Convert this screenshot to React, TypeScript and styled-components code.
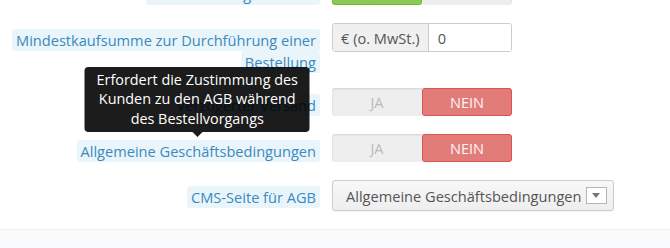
import React from 'react';
import styled, { createGlobalStyle } from 'styled-components';

const GlobalStyle = createGlobalStyle`
    html, body {
        margin: 0;
        padding: 0;
        background: #ffffff;
    }

    body {
        font-family: "Open Sans", "Liberation Sans", sans-serif;
        font-size: 14.6px;
        color: #555555;
        overflow: hidden;
    }
`;

const Panel = styled.div`
    width: 670px;
    height: 248px;
    overflow: hidden;
`;

const Form = styled.div`
    margin-top: -23px;
    padding-bottom: 3px;
`;

const Row = styled.div`
    display: grid;
    grid-template-columns: 324px 1fr;
    column-gap: 8px;
    min-height: 31px;
    margin-bottom: 15px;
`;

const LabelCell = styled.div`
    padding: 6px 4px 0 8px;
    text-align: right;
    line-height: 22px;
`;

const LabelText = styled.span`
    position: relative;
    padding: 1px 4px;
    border-radius: 3px;
    background: #eaf5fb;
    color: #3a8abb;
    -webkit-box-decoration-break: clone;
    box-decoration-break: clone;
`;

const Tooltip = styled.div`
    position: absolute;
    left: 50%;
    bottom: calc(100% + 8px);
    transform: translateX(calc(-50% - 1px));
    width: 225px;
    box-sizing: border-box;
    padding: 3px 6px 4px;
    border-radius: 4px;
    background: rgba(0, 0, 0, 0.89);
    color: #ffffff;
    font-size: 14.4px;
    line-height: 19.5px;
    text-align: center;
    white-space: normal;

    &::after {
        content: "";
        position: absolute;
        left: 50%;
        bottom: -5px;
        margin-left: -5px;
        border-left: 5px solid transparent;
        border-right: 5px solid transparent;
        border-top: 5px solid rgba(0, 0, 0, 0.89);
    }
`;

const Control = styled.div`
    display: flex;
    align-items: flex-start;
`;

const Switch = styled.div`
    display: flex;
    width: 180px;
    height: 28px;
    border-radius: 3px;
    background: #eeeeee;
    box-shadow: inset 0 1px 2px rgba(0, 0, 0, 0.12);
`;

const SwitchHalf = styled.div<{ $active?: 'yes' | 'no' }>`
    flex: 1;
    display: flex;
    align-items: center;
    justify-content: center;
    box-sizing: border-box;
    border-radius: 3px;
    text-transform: uppercase;
    color: ${p => (p.$active ? '#fdf4f4' : '#bbbbbb')};
    background: ${p =>
        p.$active === 'no' ? '#e27c79' : p.$active === 'yes' ? '#8bc954' : 'transparent'};
    border: 1px solid
        ${p => (p.$active === 'no' ? '#d9534f' : p.$active === 'yes' ? '#72b537' : 'transparent')};
`;

const InputGroup = styled.div`
    display: flex;
    width: 180px;
    height: 29px;
    box-sizing: border-box;
    border: 1px solid #cccccc;
    border-radius: 3px;
    overflow: hidden;
`;

const Addon = styled.div`
    display: flex;
    align-items: center;
    padding: 0 8px;
    background: #f0f0f0;
    border-right: 1px solid #cccccc;
    color: #555555;
    white-space: nowrap;
`;

const Input = styled.div`
    flex: 1;
    display: flex;
    align-items: center;
    padding: 0 9px;
    background: #ffffff;
    color: #555555;
`;

const Select = styled.div`
    display: flex;
    align-items: center;
    gap: 4px;
    width: 282px;
    height: 31px;
    box-sizing: border-box;
    padding: 0 7px 0 13px;
    border: 1px solid #cccccc;
    border-radius: 3px;
    background: linear-gradient(#f8f8f8, #eeeeee);
    box-shadow: 0 1px 1px rgba(0, 0, 0, 0.05);
    color: #555555;
    white-space: nowrap;
`;

const Caret = styled.div`
    display: flex;
    align-items: center;
    justify-content: center;
    flex: none;
    width: 21px;
    height: 17px;
    box-sizing: border-box;
    border: 1px solid #b5b5b5;
    background: #ffffff;

    &::before {
        content: "";
        border-left: 4px solid transparent;
        border-right: 4px solid transparent;
        border-top: 5px solid #777777;
    }
`;

const Footer = styled.div`
    height: 40px;
    border-top: 1px solid #eef0f2;
    background: #fafbfc;
`;

const SwitchRow: React.FC<{ label: React.ReactNode; value: 'yes' | 'no' }> = ({ label, value }) => (
    <Row>
        <LabelCell>{label}</LabelCell>
        <Control>
            <Switch>
                <SwitchHalf $active={value === 'yes' ? 'yes' : undefined}>Ja</SwitchHalf>
                <SwitchHalf $active={value === 'no' ? 'no' : undefined}>Nein</SwitchHalf>
            </Switch>
        </Control>
    </Row>
);

export default function App() {
    return (
        <Panel>
            <GlobalStyle />
            <Form>
                <SwitchRow value="yes" label={<LabelText>Gastbestellung erlauben</LabelText>} />

                <Row>
                    <LabelCell>
                        <LabelText>Mindestkaufsumme zur Durchführung einer Bestellung</LabelText>
                    </LabelCell>
                    <Control>
                        <InputGroup>
                            <Addon>€ (o. MwSt.)</Addon>
                            <Input>0</Input>
                        </InputGroup>
                    </Control>
                </Row>

                <SwitchRow value="no" label={<LabelText>Verzögerter Versand</LabelText>} />

                <SwitchRow
                    value="no"
                    label={
                        <LabelText>
                            Allgemeine Geschäftsbedingungen
                            <Tooltip>
                                Erfordert die Zustimmung des Kunden zu den AGB während des Bestellvorgangs
                            </Tooltip>
                        </LabelText>
                    }
                />

                <Row>
                    <LabelCell>
                        <LabelText>CMS-Seite für AGB</LabelText>
                    </LabelCell>
                    <Control>
                        <Select>
                            Allgemeine Geschäftsbedingungen
                            <Caret />
                        </Select>
                    </Control>
                </Row>
            </Form>
            <Footer />
        </Panel>
    );
}
